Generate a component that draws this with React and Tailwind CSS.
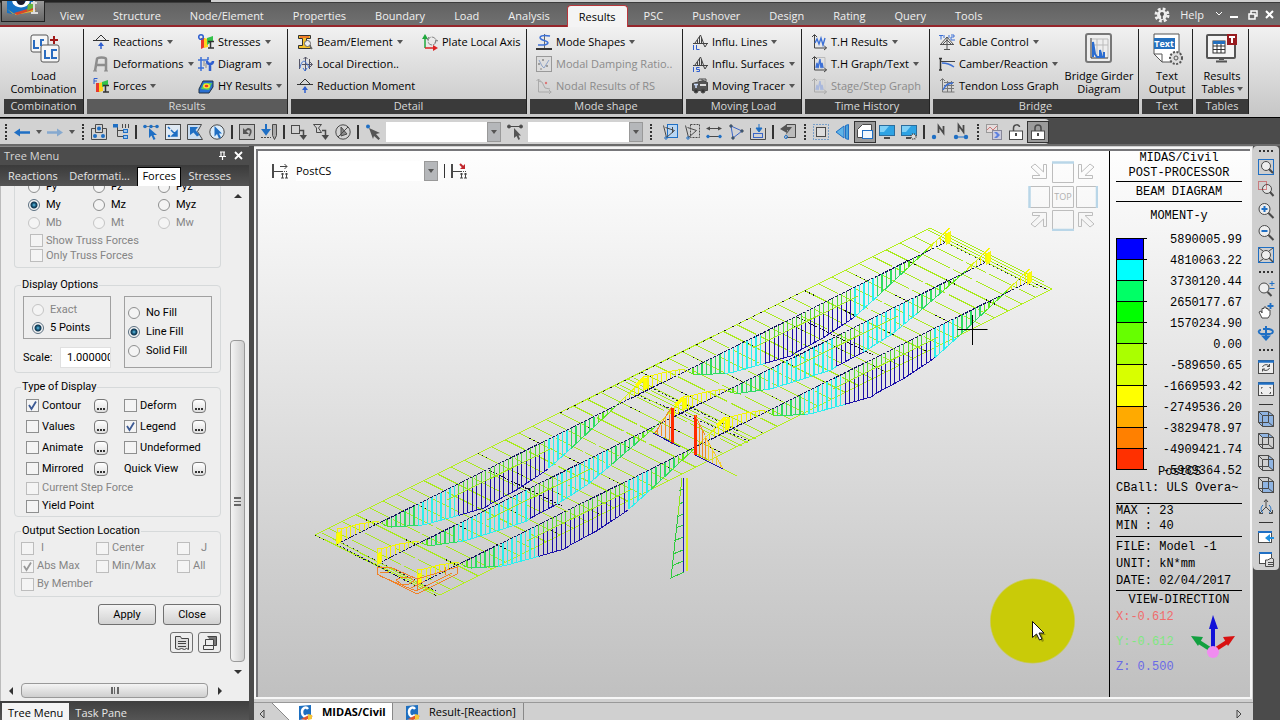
import { useState } from 'react';

const BLUE = '#1f6fc4';
const INK = '#4a4a4a';

// 16x16 drawings, stroked in dark grey unless a shape says otherwise
const icons = {
  undo: <><path d="M4 8.500h12" stroke={BLUE} strokeWidth="2.500" /><path d="M0 8.500l6-4v8z" fill={BLUE} stroke="none" /></>,
  redo: <><path d="M0 8.500h12" stroke="#86a9cf" strokeWidth="2.500" /><path d="M16 8.500l-6-4v8z" fill="#86a9cf" stroke="none" /></>,
  selectId: (
    <>
      <path d="M4.500 8.500V.5h7v8M4.500 4.500h-4v11h15v-11h-4M4.500 8.500h7" />
      <circle cx="8" cy="4.500" r="2" fill={BLUE} stroke="none" />
      <circle cx="4" cy="12" r="2" fill={BLUE} stroke="none" />
      <circle cx="12" cy="12" r="2" fill={BLUE} stroke="none" />
    </>
  ),
  selectTree: (
    <>
      <path d="M4.500 3v9.500h6M4.500 6.500h6M9.500 0v4M12.500 0v4M15.500 0v4" />
      <rect x="0" y="0" width="5" height="3.500" fill={BLUE} stroke="none" />
      <rect x="10.500" y="5.500" width="4" height="3" fill="#9bc4ee" stroke={BLUE} />
      <rect x="10.500" y="11.500" width="4" height="3" fill="#9bc4ee" stroke={BLUE} />
    </>
  ),
  selectSingle: (
    <>
      <path d="M1 2.500h14" stroke="#777" />
      <circle cx="2" cy="2.500" r="1.800" fill={BLUE} stroke="none" />
      <circle cx="8" cy="2.500" r="1.800" fill={BLUE} stroke="none" />
      <circle cx="14" cy="2.500" r="1.800" fill={BLUE} stroke="none" />
      <path d="M6 4v10l2.500-2.500 2 4.500 2-1-2-4H14z" fill={BLUE} stroke="none" />
    </>
  ),
  selectWindow: (
    <>
      <rect x=".5" y=".5" width="15" height="15" fill="#dfe9f3" />
      <path d="M3 3l2 2M6 6l6 6M12 7v5H7z" stroke={BLUE} strokeWidth="1.500" fill={BLUE} />
      <circle cx="4" cy="12" r="1.200" fill={BLUE} stroke="none" />
    </>
  ),
  selectPolygon: (
    <>
      <path d="M.5 .5h14l-4 7 5 8H.5z" fill="#c9dcef" />
      <path d="M3 3h8L8.500 6l4 5-2.500 1.500-3.500-4L3 11z" fill={BLUE} stroke="none" />
    </>
  ),
  selectIntersect: (
    <>
      <circle cx="8" cy="8" r="7.200" fill="#dcecf9" />
      <path d="M5.500 2v10.500l2.500-2.500 2 4.500 2-1-2-4h3z" fill={BLUE} stroke="none" />
    </>
  ),
  selectPrev: (
    <>
      <rect x=".5" y=".5" width="15" height="15" fill="#c3c3c3" />
      <path d="M4 4v6h6z" fill="#555" stroke="none" />
      <path d="M6 7l3-2c3 0 4 3 1 7" stroke="#555" strokeWidth="1.800" />
    </>
  ),
  selectRecent: (
    <>
      <path d="M0 13.500h10" strokeDasharray="2 1" />
      <path d="M5 0v7M2 6l3 4 3-4z" stroke={BLUE} fill={BLUE} strokeWidth="2" />
      <path d="M11.500 .5h4v11l-2 4-2-4z" fill="#aaa" />
    </>
  ),
  unselectWindow: <><rect x=".5" y="1.500" width="8" height="8" /><path d="M9 6.500h3.500V11" strokeWidth="1.500" /><path d="M8.500 11h7.500l-3.500 5z" fill={INK} stroke="none" /></>,
  unselectPoly: <><path d="M.5 .5h8L5.500 4l3 4.500h-5V4z" /><path d="M9 6.500h3.500V11" strokeWidth="1.500" /><path d="M8.500 11h7.500l-3.500 5z" fill={INK} stroke="none" /></>,
  unselectAll: <><circle cx="8" cy="8" r="7.200" /><path d="M3 13L13 3M6 3v9l6-2z" fill="#888" /></>,
  pointNode: (
    <>
      <circle cx="3" cy="2.500" r="2" fill={BLUE} stroke="none" />
      <path d="M4 4l11 5-4 1 4 4.500-1.500 1.500-4.500-4L8 15z" fill="#555" stroke="none" />
    </>
  ),
  pointElem: (
    <>
      <path d="M1 2.500h14" />
      <circle cx="2" cy="2.500" r="1.500" fill={INK} />
      <circle cx="14" cy="2.500" r="1.500" fill={INK} />
      <path d="M7 4v10l2.500-2 2 4 1.500-1-1.500-3.500h2.500z" fill="#555" stroke="none" />
    </>
  ),
  activate: <><rect x="5.500" y=".5" width="10" height="13" fill="#b9d6f2" stroke={BLUE} /><path d="M1.500 1.500l3 12 8-7-9-3M10.500 3v6" /><circle cx="4" cy="14" r="1.200" stroke={BLUE} /></>,
  deactivate: <><rect x="6.500" y=".5" width="9" height="13" strokeDasharray="2 1" /><path d="M1.500 1.500l3 12 8-7-9-3" /><circle cx="4" cy="14" r="1.200" stroke={BLUE} /></>,
  hlines: <><path d="M3 4.500h10M3 12.500h10" /><path d="M0 4.500l4-2v4zM16 4.500l-4-2v4z" fill={INK} stroke="none" /><circle cx="2" cy="12.500" r="1.300" fill={BLUE} stroke={BLUE} /><circle cx="14" cy="12.500" r="1.300" fill={BLUE} stroke={BLUE} /></>,
  triangle: <><path d="M3 2l11 5L5 14z" stroke="#3a66c8" /><circle cx="3" cy="2" r="1.200" fill={BLUE} /><circle cx="14" cy="7" r="1.200" fill={BLUE} /><circle cx="5" cy="14" r="1.200" fill={BLUE} /></>,
  activateSave: <><path d="M.5 4v11.500h15V4" /><rect x="3.500" y="9.500" width="9" height="4" stroke="#3a66c8" /><path d="M9 0v4M6 4h6l-3 4z" fill={BLUE} stroke={BLUE} /></>,
  activateUndo: <><path d="M6.500 .5h9v13h-9" fill="#bbb" /><path d="M0 5l7-5v3h5l-7 9 3-6H7v3z" fill="#555" stroke="none" /><circle cx="6" cy="13" r="1.500" stroke={BLUE} /></>,
  frame: <><rect x="3.500" y="3.500" width="9" height="9" fill="#ddd" /><rect x=".5" y=".5" width="15" height="15" stroke={BLUE} strokeDasharray="1 2" /></>,
  perspective: <><path d="M1 8l8-6v12z" fill="#5fb4e8" stroke={BLUE} /><path d="M10.500 1.500l3-1v15l-3-1z" fill="#4aa3dc" stroke={BLUE} /></>,
  hidden: <><path d="M.5 5.500l5-5h9v9l-4 4H.5z" fill="#fff" /><rect x="5.500" y="6.500" width="10" height="8" fill="#eef6fd" stroke={BLUE} /></>,
  display: <><rect x=".5" y="1.500" width="15" height="10" fill="#2ea3e4" stroke="#2b6d9d" /><path d="M1 2h9l-5 6H1z" fill="#7fd0f7" stroke="none" /><path d="M5 14h6" strokeWidth="2" /></>,
  displayOpt: <><rect x=".5" y="1.500" width="15" height="10" fill="#2ea3e4" stroke="#2b6d9d" /><path d="M1 2h9l-5 6H1z" fill="#7fd0f7" stroke="none" /><path d="M5 14h5" strokeWidth="2" /><circle cx="12.500" cy="12.500" r="2.500" fill="#ddd" strokeWidth="1.500" strokeDasharray="1 1" /></>,
  nodeNo: <><path d="M7.500 9V2l5 7V2" strokeWidth="1.800" /><circle cx="3" cy="13" r="2.200" fill={BLUE} stroke="none" /></>,
  elemNo: <><path d="M5.500 8V1l5 7V1" strokeWidth="1.800" /><path d="M3 13h10" stroke={BLUE} /><circle cx="3" cy="13" r="2.200" fill={BLUE} stroke="none" /><circle cx="13" cy="13" r="2.200" fill={BLUE} stroke="none" /></>,
  resultChart: <><rect x=".5" y=".5" width="11" height="8" stroke="#999" fill="#e4dcdc" /><path d="M1 6l3-3 3 3 4-4" stroke="#c77" /><rect x="6.500" y="6.500" width="9" height="9" fill="#ccd" stroke="#889" /><path d="M8 8h3l3 3-3 3H8l3-3z" fill="#5d80e0" stroke="none" /></>,
  unlock: <><path d="M5.500 7V4c0-4 6-4 6-1" strokeWidth="1.500" /><rect x="1.500" y="7" width="13" height="8.500" fill="#fff" /><path d="M8 9v3" strokeWidth="2" /></>,
  lock: <><path d="M5 7V4c0-4 6-4 6 0v3" strokeWidth="1.500" /><rect x="1.500" y="7" width="13" height="8.500" fill="#fff" /><path d="M8 9v3" strokeWidth="2" /></>,
  // ribbon
  reactions: <><path d="M3 6l5-5 5 5M0 6.500h16" stroke="#333" /><path d="M8 15V9" stroke="#2f5fd0" strokeWidth="1.500" /><path d="M5 12l3-4 3 4z" fill="#2f5fd0" stroke="none" /></>,
  deformations: <><path d="M2 15L4 3c0-2 9-2 9 0v12M4 9h9" stroke="#8d8d8d" strokeWidth="2.500" /><path d="M0 15h4M11 15h4" stroke="#8d8d8d" /></>,
  forces: (
    <>
      <path d="M3 5h4v9H3z" fill="#e8382c" stroke="none" /><path d="M6 5l4-1v9l-4 1z" fill="#ffd21c" stroke="none" />
      <path d="M9 4l6-2v5l-6 2z" fill="#34c24a" stroke="none" /><path d="M12.500 7v7M10 14h6M10 7.500h6" stroke="#333" strokeWidth="1.500" />
      <path d="M1 6V.5h3.500M1 3h3" stroke="#2f5fd0" />
    </>
  ),
  stresses: (
    <>
      <path d="M3 4h4v9l-4 2z" fill="#e8382c" stroke="none" /><path d="M6 4l4 1v8l-4 1z" fill="#ffd21c" stroke="none" />
      <path d="M9 4l6-2v5l-6 4z" fill="#34c24a" stroke="none" /><path d="M12.500 7v7M10 14h6M10 7.500h6" stroke="#333" strokeWidth="1.500" />
      <circle cx="3" cy="3" r="2.300" stroke="#2f5fd0" strokeWidth="1.500" />
    </>
  ),
  diagram: <><path d="M0 4h10M3 1v14M0 12h6M10 1v3" stroke="#3c70d6" strokeWidth="1.500" /><path d="M6 5v5M8 7v5" stroke="#888" /><path d="M9 5c0 4 6 4 6 0M12 8v7" stroke="#2f5fd0" strokeWidth="2.500" /></>,
  hy: <><path d="M1 11l4-8h10v6l-4 6H1z" fill="#2a6fd0" stroke="#234" /><path d="M3 11l3-6h8l-3 7z" fill="#5ad05a" stroke="none" /><ellipse cx="8.500" cy="8" rx="3.500" ry="2.500" fill="#ffe12e" stroke="none" /><ellipse cx="8.500" cy="8" rx="1.800" ry="1.200" fill="#ee3a24" stroke="none" /></>,
  beam: <><path d="M1.500 1.500h12v3h-4v7h4v3h-12v-3h4v-7h-4z" fill="#f6c229" stroke="#333" /><path d="M3 3h9" stroke="#e8382c" /><circle cx="10.500" cy="9.500" r="3" fill="#eee" stroke="#666" /><path d="M13 12l2 3" stroke="#666" strokeWidth="1.500" /></>,
  localDir: <><path d="M2.500 3v10M8.500 1v14M12.500 3v10M5 8.500h10M13 6l2.500 2.500-2.500 2.500M6.500 3l2-2 2 2" stroke="#556" /><path d="M3 12C5 2 9 4 12 12M6 12l2 3 2-3" stroke="#3c70d6" /></>,
  plateAxis: <><path d="M3 14V3" stroke="#1fa83c" strokeWidth="1.500" /><path d="M0 5l3-5 3 5z" fill="#1fa83c" stroke="none" /><path d="M3 14h10" stroke="#d22" strokeWidth="1.500" /><path d="M11 11l5 3-5 3z" fill="#d22" stroke="none" /><path d="M7 3l-2 3M13 9l1-3 2 1" stroke="#777" /><circle cx="10" cy="7" r="4" stroke="#888" strokeDasharray="5 1" /></>,
  modeShapes: <><path d="M8.500 0v14" stroke="#666" /><path d="M14 2C2 0 2 5 8 6.500s6 5-6 4.500" stroke="#3c70d6" strokeWidth="1.500" /><path d="M0 15h16" stroke="#333" strokeWidth="2" /></>,
  damping: <><rect x=".5" y=".5" width="15" height="15" fill="#ddd" stroke="#999" /><path d="M3 4l3 6 2 2 5-8" stroke="#8fa4c8" /><path d="M3 7v2M2 8h2M7 3v2M6 4h2M11 9v2M10 10h2M5 12v2" stroke="#888" /></>,
  nodalRs: <><path d="M2.500 1v13h13M2 3l4 1 3 6 5 1" stroke="#aaa" /><circle cx="10" cy="5" r="1.200" fill="#d77" stroke="none" /><path d="M.5 3l2-2 2 2M13 12l2 2-2 2" stroke="#aaa" /></>,
  influLines: <><path d="M3 9L8.500 1l3 8M5.500 6v3M7.500 3v6M9.500 3v6M1 9.500h15M11 9l2 4L15.500 9" stroke="#444" /><path d="M1.500 11v5M4.500 11v4.500h3" stroke="#2f5fd0" /></>,
  influSurf: <><path d="M3 9L8.500 1l3 8M5.500 6v3M7.500 3v6M9.500 3v6M1 9.500h15M11 9l2 4L15.500 9" stroke="#444" /><path d="M1.500 11v5M7.500 11.500h-3v2h3v2h-3" stroke="#2f5fd0" /></>,
  tracer: <><path d="M.5 5.500l11-3 4 2v8H.5z" fill="#555" stroke="#444" /><path d="M2 6.500h4M4 6v4" stroke="#cfe0ff" strokeWidth="1.500" /><path d="M8 7h6" stroke="#ddd" strokeWidth="2" /><circle cx="4" cy="13" r="2" fill="#333" /><circle cx="11" cy="13" r="2" fill="#333" /><path d="M6 3l1-2h7v2M10 2v-1" /></>,
  thResults: <><path d="M3.500 1v13h12M1 3l2.500-2.500L6 3M13 11.500l2.500 2.500-2.500 2" stroke="#444" /><path d="M4 9l2-4 2 5 2-6 2 7 2-7" stroke="#3c70d6" strokeWidth="1.400" /></>,
  thGraph: <><path d="M5 1.500h9v10" stroke="#bbb" /><path d="M3.500 1v13h12M1 3l2.500-2.500L6 3M13 11.500l2.500 2.500-2.500 2" stroke="#444" /><path d="M5 12l1-5 1 5 2-9 1 9 1-5 1 5" stroke="#3c70d6" strokeWidth="1.400" /></>,
  stage: <><path d="M5 1.500h9v10" stroke="#ccc" /><path d="M3.500 1v13h12M1 3l2.500-2.500L6 3M13 11.500l2.500 2.500-2.500 2" stroke="#aaa" /><path d="M5 12l1-5 1 5 2-9 1 9 1-5 1 5" stroke="#a9b8dc" strokeWidth="1.400" /></>,
  cable: <><path d="M8 3v12M8 3L2 10M8 3l6 7M8 6l-4 4M8 6l4 4M1 10.500h14M5 15.500h6" stroke="#555" /><path d="M0 1.500h4M2 1.500v4M12 1h3v2h-3v3h4M5 1v3M10 1v3" stroke="#3c70d6" /></>,
  camber: <><path d="M1.500 2v12M0 2.500h3M0 14h3" stroke="#333" strokeWidth="1.500" /><path d="M2 5.500h14" stroke="#444" /><path d="M3 7c5 0 8 1 12 4" stroke="#3c70d6" strokeWidth="1.500" /></>,
  tendon: <><path d="M3.500 1v13h12M1 3l2.500-2.500L6 3M5 4.500h10M5 7.500h10M5 10.500h10M8.500 3v11M12.500 3v11" stroke="#777" /><path d="M4 12c2-5 5-7 10-7" stroke="#3c70d6" strokeWidth="1.400" /></>,
  saveView: <><path d="M2 8.500h9M8 3.500h7M12.500 1l2.500 2.500-2.500 2.500M10.500 10v5M14.500 10v5M9 15h3M13 15h3M9 11h3M13 11h3" stroke="#444" /><path d="M1 1v14" strokeWidth="2" /><path d="M12 8.500h4" strokeDasharray="1 1" /></>,
  stageView: <><path d="M2 8.500h9M10.500 10v5M14.500 10v5M9 15h3M13 15h3M9 11h3M13 11h3" stroke="#444" /><path d="M1 1v14" strokeWidth="2" /><path d="M12 8.500h4" strokeDasharray="1 1" /><path d="M9 1l3 3" stroke="#c1272d" strokeWidth="2" /><path d="M14 1v5H9z" fill="#c1272d" stroke="none" /></>,
  // view tools
  zoomFit: <><rect x=".5" y=".5" width="15" height="15" stroke={BLUE} /><circle cx="8" cy="7" r="4.500" fill="#eee" /><path d="M11 10l4 4" strokeWidth="2" /></>,
  zoomWin: <><circle cx="9" cy="8" r="4.500" fill="#e4e4e4" /><path d="M12 11l3.500 4" strokeWidth="2" /><rect x=".5" y=".5" width="8" height="8" stroke="#c1272d" strokeDasharray="1 1" /></>,
  zoomIn: <><circle cx="6.500" cy="6" r="5.500" fill="#eee" /><path d="M10.500 10l5 5" strokeWidth="2" /><path d="M3.500 6h6M6.500 3v6" stroke={BLUE} strokeWidth="2" /></>,
  zoomOut: <><circle cx="6.500" cy="6" r="5.500" fill="#eee" /><path d="M10.500 10l5 5" strokeWidth="2" /><path d="M3.500 6h6" stroke={BLUE} strokeWidth="2" /></>,
  zoomAuto: <><rect x=".5" y=".5" width="15" height="15" stroke={BLUE} /><path d="M1 1l4 3M15 1l-4 3M1 15l4-3" /><circle cx="8" cy="8" r="4.500" fill="#eee" /><path d="M11 11l4 4" strokeWidth="1.500" /></>,
  zoomDyn: <><circle cx="6" cy="7" r="5" fill="#eee" /><path d="M9.500 11l4 4" strokeWidth="2" /><path d="M11.500 2.500h5M14 0v5M11.500 7.500h5" stroke={BLUE} /></>,
  pan: <><path d="M4 15l-3-6 2-1 1 2V5.500h2V4h2v1.500h2V7h2v5l-2 3z" fill="#fff" /><path d="M12.500 0v6M9.500 3h6" stroke={BLUE} strokeWidth="1.800" /></>,
  rotate: <><path d="M8 1v10" stroke={BLUE} strokeWidth="2" /><path d="M3 10.500h10L8 16z" fill={BLUE} stroke="none" /><path d="M5 4h6c5 1 5 4 1 5H3C-1 7 1 5 3 5" stroke={BLUE} strokeWidth="1.800" /></>,
  redraw: <><rect x=".5" y="1.500" width="15" height="13" fill="#eee" /><path d="M0 2.500h16" stroke={BLUE} strokeWidth="2.500" /><path d="M4.500 8c1-3 6-3 7-.5M11.500 9c-1 3-6 3-7 1M11.500 5v2.500H9M4.500 12.500V10H7" /></>,
  initial: <><rect x=".5" y="1.500" width="15" height="13" fill="#eee" /><path d="M0 2.500h16" stroke={BLUE} strokeWidth="2.500" /><path d="M3.500 7.500v-1h1M12.500 7.500v-1h-1M3.500 11v1.500h1M12.500 11v1.500h-1" /></>,
  cubeIso: <><path d="M.5 .5h10l5 4v11h-11l-4-4z" fill="#8fb4e2" /><path d="M.5 .5l4 4v11M4.500 4.500h11M.5 11.500h10V.5M10.500 11.500l5 4" /></>,
  cubeTop: <><path d="M.5 .5h10l5 4h-11z" fill="#8fb4e2" /><path d="M.5 .5v11l4 4h11v-11h-11v11M.5 11.500h10V.5M10.500 11.500l5 4" /></>,
  cubeLeft: <><path d="M10.500 .5l5 4v11l-5-4z" fill="#8fb4e2" /><path d="M.5 .5v11l4 4h11v-11h-11v11M.5 .5l4 4M.5 .5h10v11H.5" /></>,
  cubeFront: <><rect x="4.500" y="4.500" width="11" height="11" fill="#8fb4e2" /><path d="M.5 .5v11l4 4M.5 .5l4 4M.5 .5h10l5 4M10.500 .5v11H.5M10.500 11.500l5 4" /></>,
  axes: <><path d="M8 1v7L2 14M8 8l6 6M6 3l2-2.500L10 3M1.500 11v3.500H5M14.500 11v3.500H11" /><path d="M5 6c-3 3-2 6 0 8M11 6c3 3 2 6 0 8" stroke={BLUE} /></>,
  winPrev: <><rect x=".5" y="2.500" width="13" height="11" fill="#fff" /><path d="M0 3h14" stroke={BLUE} strokeWidth="2" /><path d="M16 9h-5" stroke="#1f8fe0" strokeWidth="2" /><path d="M7 9l5-4v8z" stroke="none" fill="#1f8fe0" /></>,
  winNext: <><rect x="1.500" y="1.500" width="12" height="11" fill="#fff" /><path d="M1 2h13" stroke={BLUE} strokeWidth="2" /><path d="M7.500 15.500V9h2l4-2 2 1v7.500zM10 11.500h5M10 13.500h5" fill="#ddd" /></>,
};

function Icon({ name }) {
  return (
    <svg viewBox="0 0 16 16" className="size-4 shrink-0 overflow-visible" fill="none" stroke={INK} aria-hidden="true">
      {icons[name]}
    </svg>
  );
}

function Caret() {
  return (
    <svg viewBox="0 0 6 4" className="h-1 w-1.5 shrink-0" aria-hidden="true">
      <path d="M0 0h6L3 4z" fill="#555" />
    </svg>
  );
}

function Logo() {
  return (
    <svg viewBox="0 0 16 16" className="size-4 shrink-0" aria-hidden="true">
      <path d="M1 1l12-1v13L1 15z" fill="#1d6fc0" />
      <path d="M10 4C8 1 4 3 4 7s3 6 6 3" fill="none" stroke="#fff" strokeWidth="2.500" />
      <path d="M3 14l8-4 4 1-7 4z" fill="#e0572c" />
      <path d="M10 9l4 1v4l-4 1z" fill="#f4c63a" />
    </svg>
  );
}

const menus = ['View', 'Structure', 'Node/Element', 'Properties', 'Boundary', 'Load', 'Analysis', 'Results', 'PSC', 'Pushover', 'Design', 'Rating', 'Query', 'Tools'];

function MenuBar() {
  return (
    <header className="relative shrink-0">
      <div className="flex h-[3px] border-b border-[#3c3c3c]">
        <div className="w-[211px] bg-[#222]" />
        <div className="flex-1 bg-[#cfcfcf]" />
      </div>
      <div className="flex h-6 items-end border-b-2 border-[#96262b] bg-gradient-to-b from-[#626262] to-[#707070] pl-[46px] text-[11px] text-[#f0f0f0]">
        <nav className="-mb-0.5 flex h-[22px]">
          {menus.map((m) => (
            <button
              key={m}
              className={
                m === 'Results'
                  ? 'mx-0.5 rounded-t-sm border-x border-t border-[#b8363b] bg-[#f4f4f4] px-[11px] leading-5 text-black'
                  : 'pl-[14px] pr-[15px] leading-[22px]'
              }
            >
              {m}
            </button>
          ))}
        </nav>
        <div className="ml-auto flex h-full items-center gap-2 pr-1.5 pt-0.5">
          <svg viewBox="0 0 16 16" className="size-4" aria-hidden="true">
            <circle cx="8" cy="8" r="6" fill="none" stroke="#eee" strokeWidth="3" strokeDasharray="2.700 2" />
            <circle cx="8" cy="8" r="5" fill="#eee" />
            <circle cx="8" cy="7" r="2" fill="#555" />
            <path d="M8 7v5" stroke="#555" strokeWidth="1.500" />
          </svg>
          <button className="pl-0.5">Help</button>
          <svg viewBox="0 0 62 12" className="h-3 w-[62px]" fill="none" stroke="#fff" aria-hidden="true">
            <path d="M4 3l3 3 3-3" />
            <path d="M18 8h8M54 2l7 7M61 2l-7 7" strokeWidth="2" />
            <path d="M37 5h6v5h-6zM39 5V2h6v5h-2" strokeWidth="1.500" />
          </svg>
        </div>
      </div>
      <button aria-label="Application menu" className="absolute left-px top-0 h-[22px] w-11 overflow-hidden border border-[#222] bg-gradient-to-b from-[#999] to-[#666]">
        <svg viewBox="0 0 42 20" className="h-5 w-[42px]" aria-hidden="true">
          <path d="M5 0h26v10l-15 4-11-2z" fill="#1671c4" />
          <path d="M12 0c1 6 13 6 14 0" fill="none" stroke="#fff" strokeWidth="4" />
          <circle cx="19" cy="0" r="4" fill="#1a1a2a" />
          <path d="M5 8l6 5 20-6 3 3-20 4z" fill="#e7b92f" />
          <path d="M12 12l20-6 2 2-19 6z" fill="#d6452b" />
          <path d="M26 3l7-1-2 5-6 3z" fill="#67b33c" />
          <path d="M32 0v12M29 2h6M29 12h7" stroke="#ddd" strokeWidth="2" />
        </svg>
      </button>
    </header>
  );
}

function Cmd({ icon, children, caret, disabled }) {
  return (
    <button disabled={disabled} className="flex h-[22px] items-center gap-1 whitespace-nowrap text-black disabled:text-[#8b8b8b]">
      <Icon name={icon} />
      {children}
      {caret && <Caret />}
    </button>
  );
}

function Group({ title, className, light, children }) {
  return (
    <section className={`mr-[3px] flex shrink-0 flex-col border-r border-[#222] ${className}`}>
      <div className="flex flex-1 pt-0.5">{children}</div>
      <h2 className={`h-[15px] text-center text-[11px] leading-[14px] text-[#d8d8d8] ${light ? 'bg-[#5b5b5b]' : 'bg-[#3a3a3a]'}`}>{title}</h2>
    </section>
  );
}

function Big({ lines, caret, children, className = 'flex-1' }) {
  return (
    <button className={`flex flex-col items-center whitespace-nowrap pt-0.5 leading-[13px] ${className}`}>
      <svg viewBox="0 0 32 32" className="mb-1 size-8" fill="none" stroke="#555" aria-hidden="true">{children}</svg>
      <span>{lines[0]}</span>
      <span className="flex items-center gap-0.5">{lines[1]}{caret && <Caret />}</span>
    </button>
  );
}

function Ribbon() {
  return (
    <div className="flex h-[91px] shrink-0 border-b border-black bg-gradient-to-b from-[#f1f1f1] to-[#c6c6c6] pb-[3px] pl-1 pt-0.5 text-[11px]">
      <Group title="Combination" className="w-20">
        <Big lines={['Load', 'Combination']}>
          <rect x="3" y="2" width="17" height="17" rx="2" fill="#f6f6f6" />
          <rect x="13" y="12" width="18" height="17" rx="2" fill="#f6f6f6" />
          <path d="M6 7v8h5M16 7h-3v6M17 17v8h5M29 17h-5v8h5" stroke="#2a6cc0" strokeWidth="2" />
          <path d="M26 3v8M22 7h8" stroke="#a01818" strokeWidth="2" />
        </Big>
      </Group>
      <Group title="Results" light className="w-[201px]">
        <div className="w-[105px] pl-1.5">
          <Cmd icon="reactions" caret>Reactions</Cmd>
          <Cmd icon="deformations" caret>Deformations</Cmd>
          <Cmd icon="forces" caret>Forces</Cmd>
        </div>
        <div className="pl-1.5">
          <Cmd icon="stresses" caret>Stresses</Cmd>
          <Cmd icon="diagram" caret>Diagram</Cmd>
          <Cmd icon="hy" caret>HY Results</Cmd>
        </div>
      </Group>
      <Group title="Detail" className="w-[236px]">
        <div className="w-[125px] pl-1.5">
          <Cmd icon="beam" caret>Beam/Element</Cmd>
          <Cmd icon="localDir">Local Direction..</Cmd>
          <Cmd icon="reactions">Reduction Moment</Cmd>
        </div>
        <div className="pl-1.5">
          <Cmd icon="plateAxis">Plate Local Axis</Cmd>
        </div>
      </Group>
      <Group title="Mode shape" className="w-[153px]">
        <div className="pl-1.5">
          <Cmd icon="modeShapes" caret>Mode Shapes</Cmd>
          <Cmd icon="damping" disabled>Modal Damping Ratio..</Cmd>
          <Cmd icon="nodalRs" disabled>Nodal Results of RS</Cmd>
        </div>
      </Group>
      <Group title="Moving Load" className="w-[116px]">
        <div className="pl-1.5">
          <Cmd icon="influLines" caret>Influ. Lines</Cmd>
          <Cmd icon="influSurf" caret>Influ. Surfaces</Cmd>
          <Cmd icon="tracer" caret>Moving Tracer</Cmd>
        </div>
      </Group>
      <Group title="Time History" className="w-[125px]">
        <div className="pl-1.5">
          <Cmd icon="thResults" caret>T.H Results</Cmd>
          <Cmd icon="thGraph" caret>T.H Graph/Text</Cmd>
          <Cmd icon="stage" disabled>Stage/Step Graph</Cmd>
        </div>
      </Group>
      <Group title="Bridge" className="w-[206px]">
        <div className="w-[130px] pl-1.5">
          <Cmd icon="cable" caret>Cable Control</Cmd>
          <Cmd icon="camber" caret>Camber/Reaction</Cmd>
          <Cmd icon="tendon">Tendon Loss Graph</Cmd>
        </div>
        <Big lines={['Bridge Girder', 'Diagram']} className="w-[72px]">
          <rect x="3" y="1" width="25" height="28" rx="2" fill="#eee" stroke="#777" strokeWidth="2" />
          <path d="M9 6h16v19M9 12h16M14 6v19M20 6v19" stroke="#bbb" />
          <path d="M8 5v20h17" stroke="#333" />
          <path d="M10 24V9l2 12 2 3h3v-7l2 7h2v-5" stroke="#2a6cd0" strokeWidth="2" />
        </Big>
      </Group>
      <Group title="Text" className="w-[51px]">
        <Big lines={['Text', 'Output']}>
          <path d="M3 1h25v28H11l-8-8z" fill="#fff" />
          <path d="M3 21h8v8" />
          <rect x="3" y="5" width="21" height="11" fill="#2470be" stroke="none" />
          <text x="13" y="14" fontSize="9" fontWeight="700" fill="#fff" stroke="none" textAnchor="middle">Text</text>
          <circle cx="25" cy="25" r="6" fill="#ddd" strokeWidth="2" strokeDasharray="2 1.500" />
          <circle cx="25" cy="25" r="2" />
        </Big>
      </Group>
      <Group title="Tables" className="w-[53px]">
        <Big lines={['Results', 'Tables']} caret>
          <rect x="1" y="2" width="28" height="23" rx="1" fill="#f4f4f4" strokeWidth="2" />
          <path d="M10 28.500h11M13 26h5" strokeWidth="2" />
          <rect x="7" y="8" width="12" height="12" fill="#fff" stroke="#333" />
          <path d="M7 9.500h12" stroke="#2470be" strokeWidth="3" />
          <path d="M7 13h12M7 16.500h12M11 11v9M15 11v9" stroke="#333" />
          <rect x="21" y="1" width="10" height="11" fill="#981b1f" stroke="none" />
          <path d="M23 4h6M26 4v6" stroke="#fff" strokeWidth="2" />
        </Big>
      </Group>
    </div>
  );
}

function Tool({ name, active }) {
  return (
    <button
      aria-label={name}
      className={`flex size-[22px] shrink-0 items-center justify-center ${active ? 'border border-[#333] bg-[#9b9b9b]' : ''}`}
    >
      <Icon name={name} />
    </button>
  );
}

const Sep = () => <div className="mx-[3px] h-3.5 w-0.5 shrink-0 bg-[#333]" />;

function Grip({ className = 'w-[11px]' }) {
  return (
    <div className={`flex h-4 shrink-0 justify-center ${className}`}>
      <div className="h-full border-l-2 border-dotted border-[#333]" />
    </div>
  );
}

function Combo({ label, className, value = '' }) {
  return (
    <div className={`relative flex h-5 shrink-0 bg-white ${className}`}>
      <select aria-label={label} defaultValue={value} className="w-full appearance-none bg-white text-[11px] outline-none">
        <option value={value}>{value}</option>
      </select>
      <span className="pointer-events-none flex w-3.5 shrink-0 items-center justify-center border border-[#999] bg-[#b5b7ba]">
        <Caret />
      </span>
    </div>
  );
}

function ToolBar() {
  return (
    <div className="flex h-7 shrink-0 border-b-2 border-[#6a6a6a] bg-[#4b4b4b] pt-px">
      <div className="flex items-center rounded-r-sm bg-[#d2d2d2] pt-px">
        <Grip />
        <Tool name="undo" />
        <span className="flex w-[11px] justify-center"><Caret /></span>
        <Tool name="redo" />
        <span className="flex w-[11px] justify-center"><Caret /></span>
        <Grip />
        <Tool name="selectId" />
        <Tool name="selectTree" />
        <Sep />
        <Tool name="selectSingle" />
        <Tool name="selectWindow" />
        <Tool name="selectPolygon" />
        <Tool name="selectIntersect" />
        <Sep />
        <Tool name="selectPrev" />
        <Tool name="selectRecent" />
        <Sep />
        <Tool name="unselectWindow" />
        <Tool name="unselectPoly" />
        <Tool name="unselectAll" />
        <Sep />
        <Tool name="pointNode" />
        <Combo label="Select nodes" className="ml-0.5 mr-[3px] w-[115px]" />
        <Tool name="pointElem" />
        <Combo label="Select elements" className="ml-0.5 w-[115px]" />
        <Grip className="w-4" />
        {['activate', 'deactivate', 'hlines', 'triangle', 'activateSave'].map((n) => <Tool key={n} name={n} />)}
        <Sep />
        <Tool name="activateUndo" />
        <Grip />
        <Tool name="frame" />
        <Tool name="perspective" />
        <Tool name="hidden" active />
        <Tool name="display" />
        <Tool name="displayOpt" />
        <Sep />
        <Tool name="nodeNo" />
        <Tool name="elemNo" />
        <Grip />
        <Tool name="resultChart" />
        <Tool name="unlock" />
        <Tool name="lock" active />
      </div>
    </div>
  );
}

const radioStyle =
  'size-3 shrink-0 appearance-none rounded-full border border-[#8e8f8f] bg-[#f4f4f4] checked:border-[#5b6f80] checked:bg-[radial-gradient(circle,#5fc5ee_0,#17506f_2px,#123a55_3px,#f4f4f4_4px)] disabled:border-[#c4c4c4]';
const checkStyle = 'peer size-[13px] appearance-none border border-[#8e8f8f] bg-[#f4f4f4] disabled:border-[#bdbdbd]';

function Radio({ name, label, checked, disabled, className = '' }) {
  return (
    <label className={`flex items-center gap-1.5 ${disabled ? 'text-[#858585]' : ''} ${className}`}>
      <input type="radio" name={name} defaultChecked={checked} disabled={disabled} className={radioStyle} />
      {label}
    </label>
  );
}

function Check({ label, checked, disabled, className = '' }) {
  return (
    <label className={`flex items-center gap-[3px] whitespace-nowrap ${disabled ? 'text-[#858585]' : ''} ${className}`}>
      <span className="relative flex">
        <input type="checkbox" defaultChecked={checked} disabled={disabled} className={checkStyle} />
        <svg viewBox="0 0 13 13" className="pointer-events-none absolute inset-0 hidden size-[13px] peer-checked:block" aria-hidden="true">
          <path d="M3 6l2.500 4L10 2.500" fill="none" stroke={disabled ? '#999' : '#3c5a94'} strokeWidth="1.800" />
        </svg>
      </span>
      {label}
    </label>
  );
}

function More({ label }) {
  return (
    <span className="flex items-center">
      <button aria-label={label} className="flex size-3.5 items-end justify-center rounded-sm border border-[#777] bg-gradient-to-b from-white to-[#ddd] pb-0.5">
        <svg viewBox="0 0 8 2" className="h-0.5 w-2" aria-hidden="true"><path d="M0 0h2v2H0zM3 0h2v2H3zM6 0h2v2H6z" fill="#333" /></svg>
      </button>
    </span>
  );
}

function Box({ title, className = '', inner = '', children }) {
  return (
    <fieldset className={`ml-[13px] mr-[9px] min-w-0 rounded-sm border border-[#d6d9da] ${className}`}>
      {title && <legend className="ml-1.5 px-px leading-[14px]">{title}</legend>}
      <div className={inner}>{children}</div>
    </fieldset>
  );
}

function ForcesForm() {
  return (
    <form className="w-[229px] shrink-0 overflow-hidden font-['Roboto',sans-serif] text-[11px] leading-[14px] text-black" onSubmit={(e) => e.preventDefault()}>
      <Box className="-mt-2 border-t-0" inner="pb-1 pl-[13px]">
        <div className="grid grid-cols-[65px_65px_60px]">
          {['Fy', 'Fz', 'Fyz'].map((l) => <Radio key={l} name="component" label={l} className="h-[18px]" />)}
          <Radio name="component" label="My" checked className="h-[18px]" />
          {['Mz', 'Myz'].map((l) => <Radio key={l} name="component" label={l} className="h-[18px]" />)}
          {['Mb', 'Mt', 'Mw'].map((l) => <Radio key={l} name="component" label={l} disabled className="h-[18px]" />)}
        </div>
        <Check label="Show Truss Forces" disabled className="ml-0.5 mt-px h-[15px]" />
        <Check label="Only Truss Forces" disabled className="ml-0.5 h-[15px]" />
      </Box>

      <Box title="Display Options" className="mt-2.5" inner="pb-1 pl-2">
        <div className="flex items-start gap-[13px] pt-1">
          <div className="w-[88px]">
            <div className="flex h-[43px] flex-col justify-center border border-[#a0a0a0] pl-2 pt-0.5">
              <Radio name="points" label="Exact" disabled className="h-[18px]" />
              <Radio name="points" label="5 Points" checked className="h-[18px]" />
            </div>
            <label className="mt-2 flex items-center justify-between">
              Scale:
              <input defaultValue="1.000000" className="h-[21px] w-[51px] border border-[#e0e0e0] bg-white pl-1.5 text-[11px] outline-none" />
            </label>
          </div>
          <div className="h-[72px] w-[88px] border border-[#a0a0a0] pl-[3px] pt-1.5">
            <Radio name="fill" label="No Fill" className="h-[19px]" />
            <Radio name="fill" label="Line Fill" checked className="h-[19px]" />
            <Radio name="fill" label="Solid Fill" className="h-5" />
          </div>
        </div>
      </Box>

      <Box title="Type of Display" className="mt-[7px]" inner="pb-px pl-[11px]">
        <div className="grid grid-cols-[68px_30px_68px_20px] pt-px *:h-[21px]">
          <Check label="Contour" checked /><More label="Contour details" />
          <Check label="Deform" /><More label="Deform details" />
          <Check label="Values" /><More label="Values details" />
          <Check label="Legend" checked /><More label="Legend details" />
          <Check label="Animate" /><More label="Animate details" />
          <Check label="Undeformed" className="col-span-2" />
          <Check label="Mirrored" /><More label="Mirrored details" />
          <span className="flex items-center whitespace-nowrap">Quick View</span><More label="Quick view details" />
        </div>
        <Check label="Current Step Force" disabled className="h-[18px]" />
        <Check label="Yield Point" className="h-[18px]" />
      </Box>

      <Box title="Output Section Location" className="mt-[7px]" inner="pb-[3px] pl-1.5 pt-px">
        <div className="grid grid-cols-[75px_81px_40px] *:h-[18px]">
          <Check label={<span className="pl-1">I</span>} disabled />
          <Check label="Center" disabled />
          <Check label={<span className="pl-2">J</span>} disabled />
          <Check label="Abs Max" checked disabled />
          <Check label="Min/Max" disabled />
          <Check label="All" disabled />
          <Check label="By Member" disabled />
        </div>
      </Box>

      <div className="mr-[9px] mt-[7px] flex justify-end gap-[7px]">
        {['Apply', 'Close'].map((l) => (
          <button key={l} className="h-[21px] w-[58px] rounded-[3px] border border-[#707070] bg-gradient-to-b from-[#f4f4f4] to-[#d2d2d2]">{l}</button>
        ))}
      </div>
      <div className="mr-[9px] mt-[7px] flex justify-end gap-[5px]">
        <button aria-label="Open list" className="flex h-[21px] w-[23px] items-center justify-center rounded-[3px] border border-[#707070]">
          <svg viewBox="0 0 16 16" className="size-4" fill="#ddd" stroke="#444" aria-hidden="true"><path d="M1.500 1.500h5l1 2h7v11l-2-1-2 1-3-1-3 1-3-1zM4 6.500h8M4 8.500h8M4 11.500h8" /></svg>
        </button>
        <button aria-label="Save list" className="flex h-[21px] w-[23px] items-center justify-center rounded-[3px] border border-[#707070]">
          <svg viewBox="0 0 16 16" className="size-4" fill="#eee" stroke="#444" aria-hidden="true"><path d="M5.500 1.500h9v9h-3" fill="#777" /><path d="M3.500 4.500h8v6h-8zM1.500 10.500h10v4h-10z" /></svg>
        </button>
      </div>
    </form>
  );
}

function Arrow({ d, className }) {
  return (
    <svg viewBox="0 0 8 8" className={`size-2 shrink-0 ${className}`} aria-hidden="true">
      <path d={d} fill="#333" />
    </svg>
  );
}

function TreeMenu() {
  const [tab, setTab] = useState('Forces');
  return (
    <aside className="flex w-[249px] shrink-0 flex-col overflow-hidden">
      <div className="flex h-[19px] items-center border-t border-[#888] bg-[#4c4c4c] pl-1 pr-1.5 text-[11px] text-[#d6d6d6]">
        Tree Menu
        <svg viewBox="0 0 24 10" className="ml-auto h-2.5 w-6" fill="none" stroke="#fff" aria-hidden="true">
          <path d="M1 1h5M2 1v4M5 1v4M0 5.500h7M3.500 5v4" strokeWidth="1.200" />
          <path d="M16 1l7 7M23 1l-7 7" strokeWidth="1.800" />
        </svg>
      </div>
      <div className="flex h-[21px] items-end justify-between bg-gradient-to-b from-[#3b3b3b] to-[#545454] pl-1 pr-3.5 text-[11px] text-[#e6e6e6]">
        {['Reactions', 'Deformati...', 'Forces', 'Stresses'].map((t) => (
          <button
            key={t}
            onClick={() => setTab(t)}
            className={`flex h-[19px] items-start px-1 leading-4 ${t === tab ? 'border border-b-0 border-black bg-white text-black' : 'pt-px'}`}
          >
            {t}
          </button>
        ))}
      </div>
      <div className="flex min-h-0 flex-1 flex-col border-l border-[#bbb] bg-[#eeeeee]">
        <div className="flex min-h-0 flex-1 overflow-hidden">
          <ForcesForm />
          <div className="flex w-[15px] shrink-0 flex-col items-center pb-[7px] pt-1.5">
            <Arrow d="M0 6h8L4 2z" />
            <div className="mt-[140px] flex w-full flex-1 items-center justify-center rounded-sm border border-[#999] bg-gradient-to-r from-[#f4f4f4] to-[#cfcfcf]">
              <div className="h-[9px] w-[7px] border-y-2 border-[#666] bg-[linear-gradient(#666,#666)] bg-[length:100%_1px] bg-center bg-no-repeat" />
            </div>
            <Arrow d="M0 2h8L4 6z" className="mt-1.5" />
          </div>
        </div>
        <div className="mb-[3px] flex h-[15px] items-center pl-1.5">
          <Arrow d="M6 0v8L2 4z" />
          <div className="ml-1.5 flex h-full w-[187px] items-center justify-center rounded-sm border border-[#999] bg-gradient-to-b from-[#f4f4f4] to-[#cfcfcf]">
            <div className="h-[7px] w-2 border-x-2 border-[#666] bg-[linear-gradient(#666,#666)] bg-[length:1px_100%] bg-center bg-no-repeat" />
          </div>
          <Arrow d="M2 0v8l4-4z" className="ml-2" />
        </div>
      </div>
      <div className="flex h-[19px] items-end bg-gradient-to-b from-[#3f3f3f] to-[#555] pl-0.5 text-[11px] text-[#e6e6e6]">
        <button className="h-[17px] bg-[#f4f4f4] px-1.5 leading-[20px] text-black">Tree Menu</button>
        <button className="h-[17px] px-1.5 leading-[20px]">Task Pane</button>
      </div>
    </aside>
  );
}

// ---- beam diagram ----
const SLOPE = -0.496;
const SPAN = 306.5;
const STEP = 4.5;
const girders = [
  { x: 337, y: 544, k: 1 },
  { x: 377, y: 564, k: 0.84 },
  { x: 417, y: 585, k: 1 },
];
// offset along the span -> diagram depth, positive hangs below the girder
const profile = [[0, -15], [5, -13], [22, -9], [40, -3], [52, 9], [87, 24], [123, 32], [152, 38], [153, 36], [180, 35], [210, 30], [235, 20], [260, 9], [278, 1], [290, -5], [306, -12]];

function depthAt(r) {
  for (let i = 1; i < profile.length; i++) {
    const [x1, y1] = profile[i];
    if (r <= x1) {
      const [x0, y0] = profile[i - 1];
      return y0 + ((r - x0) / (x1 - x0)) * (y1 - y0);
    }
  }
  return -12;
}

function Girder({ x, y, k }) {
  const hatch = [];
  const edge = [];
  for (let s = 0; s < 2; s++) {
    const x0 = x + s * SPAN;
    for (let i = 0; i < 68; i++) {
      const r = i * STEP;
      const raw = depthAt(r);
      const scale = raw > 0 ? k : 1;
      const d = raw * scale;
      const px = x0 + r;
      const py = y + (s * SPAN + r) * SLOPE;
      const dark = k < 1 ? r > 152 && r < 177 : r > 121 && r < 211;
      let color = '#2cf0ee';
      if (dark) color = '#1b0fa8';
      else if (raw < -7) color = '#f6f600';
      else if (raw < 0) color = '#dcf01a';
      else if (raw < 9) color = '#5be61f';
      else if (raw < 21) color = '#2fdc62';
      hatch.push(<path key={`${s}-${i}`} d={`M${px} ${py}v${d}`} stroke={color} strokeWidth={!dark && raw > 0 && i % 2 ? 2 : 1} />);
      if (dark) hatch.push(<path key={`${s}-${i}t`} d={`M${px} ${py}v10`} stroke="#52d83a" />);
      edge.push(<path key={`${s}-${i}e`} d={`M${px} ${py + d}l${STEP} ${(depthAt(r + STEP) - raw) * scale + STEP * SLOPE}`} stroke={color} />);
    }
  }
  return (
    <g>
      {hatch}
      {edge}
      <path d={`M${x + 110} ${y - 44}l105 -52M${x + 416} ${y - 196}l105 -52`} stroke="#9fe81a" />
      <path d={`M${x} ${y}l613 -304`} stroke="#14145e" strokeDasharray="3 1" />
    </g>
  );
}

function BeamDiagram() {
  const cross = Array.from({ length: 46 }, (_, i) => ({ x: 315 + i * 13.6, y: 535 - i * 6.79, i }));
  return (
    <svg viewBox="258 151 851 546" preserveAspectRatio="xMinYMin meet" className="h-full w-full" fill="none" role="img" aria-label="Moment-y beam diagram">
      <defs>
        <radialGradient id="spot">
          <stop offset="0.96" stopColor="#c9cb08" />
          <stop offset="1" stopColor="#c9cb08" stopOpacity="0" />
        </radialGradient>
      </defs>
      <g shapeRendering="crispEdges">
        <path d="M315 535L930 228L1052 289L440 595z" stroke="#b4f01c" />
        {cross.map(({ x, y, i }) => (
          <path key={i} d={`M${x} ${y}l122 61`} stroke="#a9ea1e" strokeDasharray={i % 3 ? '22 4 30 3' : undefined} />
        ))}
        {cross.filter(({ i }) => i % 3 === 0).map(({ x, y, i }) => (
          <path key={i} d={`M${x} ${y}l122 61`} stroke="#111" strokeDasharray="1.500 3 1.500 3 1.500 34" strokeDashoffset={(i * 11) % 44} />
        ))}
        <path d="M560 413L800 293" stroke="#111" strokeDasharray="2 6" />

        {/* abutments and pier cap */}
        <path d="M328 536l108 55M336 544l80 42M637 395l112 46M640 382l100 50M943 241l92 46" stroke="#181850" strokeDasharray="2 2" />
        <path d="M322 533l112 58M620 385l122 61M626 382l122 61M634 378l122 61M938 238l100 50M944 232l100 50" stroke="#a9ea1e" />
        <path d="M489 470l73 36M797 317l76 38" stroke="#111" strokeDasharray="3 1" />
        {girders.map((g) => <Girder key={g.x} {...g} />)}

        {/* end ordinates */}
        {[[336, 531], [377, 551], [417, 572], [946, 231], [986, 251], [1027, 271], [643, 377], [682, 397], [725, 417]].map(([x, y]) => (
          <path key={x} d={`M${x} ${y + 3}l4 -2v10l-4 3z`} fill="#ffff00" stroke="#f2f21a" />
        ))}
        <path d="M636 386l8 -8M675 406l8 -8M717 426l8 -8" stroke="#ffff00" strokeWidth="3" />

        {/* cap beam moments */}
        <path d="M657 430v5M661 425v11M665 420v18M669 415v25M655 433l17-26" stroke="#f08a24" />
        <path d="M672.500 408v36M695 415v40" stroke="#ff2a00" strokeWidth="3" />
        <path d="M699 424v33M702 429v30M705 436v24M695 415l10 20" stroke="#f08a24" />
        <path d="M708 443v19M712 449v15M716 456v10M720 462v6M705 436l18 33" stroke="#f5cf2a" />
        <path d="M653 433l27 14M695 455l28 14" stroke="#1b0fa8" />
        <path d="M723 469l14 7" stroke="#b4f01c" />

        {/* pier */}
        <path d="M682 478l-4 37" stroke="#8fe81a" />
        <path d="M678 515l-7 63 13-6M680 504l3-2M677 517l6-3M676 528l7-3M674 541l9-4M673 554l10-4M672 566l11-5M679 491l4-2" stroke="#2ecb3c" />
        <path d="M683.500 478v94" stroke="#1b1bb0" />
        <path d="M687 478v93" stroke="#d8f01c" strokeWidth="1.500" />

        {/* abutment footing */}
        <path d="M377 567h13l27 12 40-12v7l-40 20-40-20zM380 572h9M396 580l6-3h8l4 4-5 3h-8zM411 588l14-7M445 567v8M417 579v12M380 576l36 15 36-18" stroke="#f08228" />
      </g>
      <path d="M957.500 329.500h30M972.500 315v30" stroke="#000" />
      <circle cx="1032.500" cy="621" r="43" fill="url(#spot)" />
      <path d="M1033 622v15l4-3 3 6 2-1-2-6h4z" fill="#0004" transform="translate(2 2)" />
      <path d="M1032.500 621.500v16l4-3.500 3 6 2.500-1-3-6h5z" fill="#fff" stroke="#111" />
    </svg>
  );
}

function ViewCube() {
  return (
    <svg viewBox="0 0 70 70" className="pointer-events-none absolute right-[11px] top-2.5 size-[70px]" fill="none" stroke="#bdbdbd" aria-hidden="true">
      <path d="M24.500 1.500h21v20h-21zM24.500 25.500h21v21h-21zM24.500 49.500h21v19h-21zM1.500 25.500h20v21h-20zM48.500 25.500h20v21h-20z" />
      <path d="M24 1.500h22M24 69h22M1.500 25v22M69 25v22" stroke="#b9d6e8" strokeWidth="2.500" />
      <path d="M3 6l9 8.500H4.500v3h14v-14h-3V11L7 3zM66 6l-9 8.500h7.500v3h-14v-14h3V11L62 3zM3 63l9-8.500H4.500v-3h14v14h-3V58L7 66zM66 63l-9-8.500h7.500v-3h-14v14h3V58l8.500 8z" />
      <text x="35" y="39" fontSize="9" textAnchor="middle" fill="#b0b0b0" stroke="none">TOP</text>
    </svg>
  );
}

const legend = [
  ['5890005.99', 'bg-[#0000ff]'],
  ['4810063.22', 'bg-[#00ffff]'],
  ['3730120.44', 'bg-[#00ff66]'],
  ['2650177.67', 'bg-[#00ff00]'],
  ['1570234.90', 'bg-[#66ff00]'],
  ['0.00', 'bg-[#aaff00]'],
  ['-589650.65', 'bg-[#d8ff00]'],
  ['-1669593.42', 'bg-[#ffff00]'],
  ['-2749536.20', 'bg-[#ffaa00]'],
  ['-3829478.97', 'bg-[#ff8000]'],
  ['-4909421.74', 'bg-[#ff3000]'],
  ['-5989364.52', null],
];

function Legend() {
  return (
    <div className="w-[141px] shrink-0 overflow-hidden border-l border-black pl-1.5 pr-2 font-['Liberation_Mono',monospace] text-[12px] leading-[15px] text-black">
      <div className="border-b border-black text-center">MIDAS/Civil<br />POST-PROCESSOR</div>
      <div className="h-5 border-b border-black text-center leading-5">BEAM DIAGRAM</div>
      <div className="h-7 text-center leading-7">MOMENT-y</div>
      <div className="relative flex justify-between">
        <div className="mt-2 w-[31px] border-t border-black">
          {legend.filter(([, c]) => c).map(([v, c]) => (
            <div key={v} className="h-[21px] border-b border-black"><div className={`h-full w-7 border-x border-black ${c}`} /></div>
          ))}
        </div>
        <ul className="text-right">
          {legend.map(([v]) => <li key={v} className="h-[21px] leading-[21px]">{v}</li>)}
        </ul>
        <span className="absolute bottom-0.5 left-[42px]">PostCS</span>
      </div>
      <div className="h-[22px] whitespace-nowrap border-b border-black leading-3">CBall: ULS Overa~</div>
      <div className="border-b border-black pb-0.5">MAX : 23<br />MIN : 40</div>
      <div className="border-b border-black pt-0.5 leading-[17px]">FILE: Model -1<br />UNIT: kN*mm<br />DATE: 02/04/2017</div>
      <div className="h-[18px] text-center leading-[18px]">VIEW-DIRECTION</div>
      <div className="flex justify-between">
        <div className="flex flex-col gap-[9px] whitespace-pre leading-4">
          <span className="text-[#f06c6c]">X:-0.612</span>
          <span className="text-[#7fe87f]">Y:-0.612</span>
          <span className="text-[#6a6ae6]">Z: 0.500</span>
        </div>
        <svg viewBox="0 0 46 46" className="mr-1.5 mt-1.5 h-[46px] w-[46px] shrink-0" aria-hidden="true">
          <path d="M23 34V10" stroke="#1212d8" strokeWidth="4" />
          <path d="M23 0l5 14h-9z" fill="#1212d8" />
          <path d="M23 36l-14-9" stroke="#12a040" strokeWidth="4" />
          <path d="M1 21l12 1-5 9z" fill="#12a040" />
          <path d="M23 36l14-9" stroke="#d81212" strokeWidth="4" />
          <path d="M45 21l-12 1 5 9z" fill="#d81212" />
          <circle cx="23" cy="37" r="6" fill="#f08cf0" />
        </svg>
      </div>
    </div>
  );
}

function ModelView() {
  return (
    <main className="flex min-w-0 flex-1 flex-col bg-[#d0d0d0] pt-px">
      <div className="mr-px flex min-h-0 flex-1 border-2 border-[#f6f6f6]">
        <div className="flex min-w-0 flex-1 border-l-2 border-t-2 border-[#77777a] bg-gradient-to-b from-[#fefefe] to-[#c0c0c0]">
          <div className="relative min-w-0 flex-1">
            <BeamDiagram />
            <div className="absolute left-3.5 top-2.5 flex items-center">
              <Icon name="saveView" />
              <Combo label="Stage" value="PostCS" className="ml-2 w-[142px]" />
              <div className="mx-1.5 h-3.5 w-px bg-[#333]" />
              <Icon name="stageView" />
            </div>
            <ViewCube />
          </div>
          <Legend />
        </div>
      </div>
      <div className="flex h-[21px] items-end pt-0.5 text-[11px]">
        <div className="flex h-[18px] w-full border-t border-[#999]">
          <svg viewBox="0 0 36 18" className="h-[18px] w-9 shrink-0" aria-hidden="true">
            <path d="M18 0h18v18z" fill="#fff" />
            <path d="M18 0l18 18" stroke="#888" />
            <path d="M10 7v8l-4-4z" fill="none" stroke="#444" />
          </svg>
          <button className="flex w-[103px] items-center gap-2 border-r border-[#888] bg-white pl-2 pt-0.5 font-bold text-black"><Logo />MIDAS/Civil</button>
          <button className="flex w-[131px] items-center gap-2 border-r border-[#888] pl-3 pt-0.5 text-black"><Logo />Result-[Reaction]</button>
          <svg viewBox="0 0 8 10" className="ml-auto mr-2.5 mt-1.5 h-2.5 w-2" fill="none" stroke="#444" aria-hidden="true"><path d="M2 1v8l4-4z" /></svg>
        </div>
      </div>
    </main>
  );
}

const viewTools = ['zoomFit', 'zoomWin', 'zoomIn', 'zoomOut', 'zoomAuto', 'grip', 'zoomDyn', 'pan', 'rotate', 'grip', 'redraw', 'initial', 'sep', 'cubeIso', 'cubeTop', 'cubeLeft', 'cubeFront', 'axes', 'sep', 'winPrev', 'winNext'];

function ViewGrip({ className = 'h-3' }) {
  return (
    <div className={`flex w-3.5 items-center ${className}`}>
      <div className="w-full border-t-2 border-dotted border-[#333]" />
    </div>
  );
}

function ViewTools() {
  return (
    <div className="w-[27px] shrink-0 bg-[#4b4b4b] pr-px">
      <div className="flex flex-col items-center rounded-sm bg-[#cfcfcf]">
        <ViewGrip className="h-2.5" />
        {viewTools.map((t, i) => {
          if (t === 'grip') return <ViewGrip key={i} />;
          if (t === 'sep') return <div key={i} className="flex h-2 w-3.5 items-center"><div className="w-full border-t border-[#333]" /></div>;
          return <Tool key={i} name={t} />;
        })}
      </div>
    </div>
  );
}

export default function App() {
  return (
    <div className="flex h-screen flex-col overflow-hidden bg-[#4b4b4b] font-['Open_Sans',sans-serif]">
      <MenuBar />
      <Ribbon />
      <ToolBar />
      <div className="flex min-h-0 flex-1">
        <TreeMenu />
        <div className="w-[5px] shrink-0 bg-[#4b4b4b]" />
        <ModelView />
        <ViewTools />
      </div>
    </div>
  );
}
